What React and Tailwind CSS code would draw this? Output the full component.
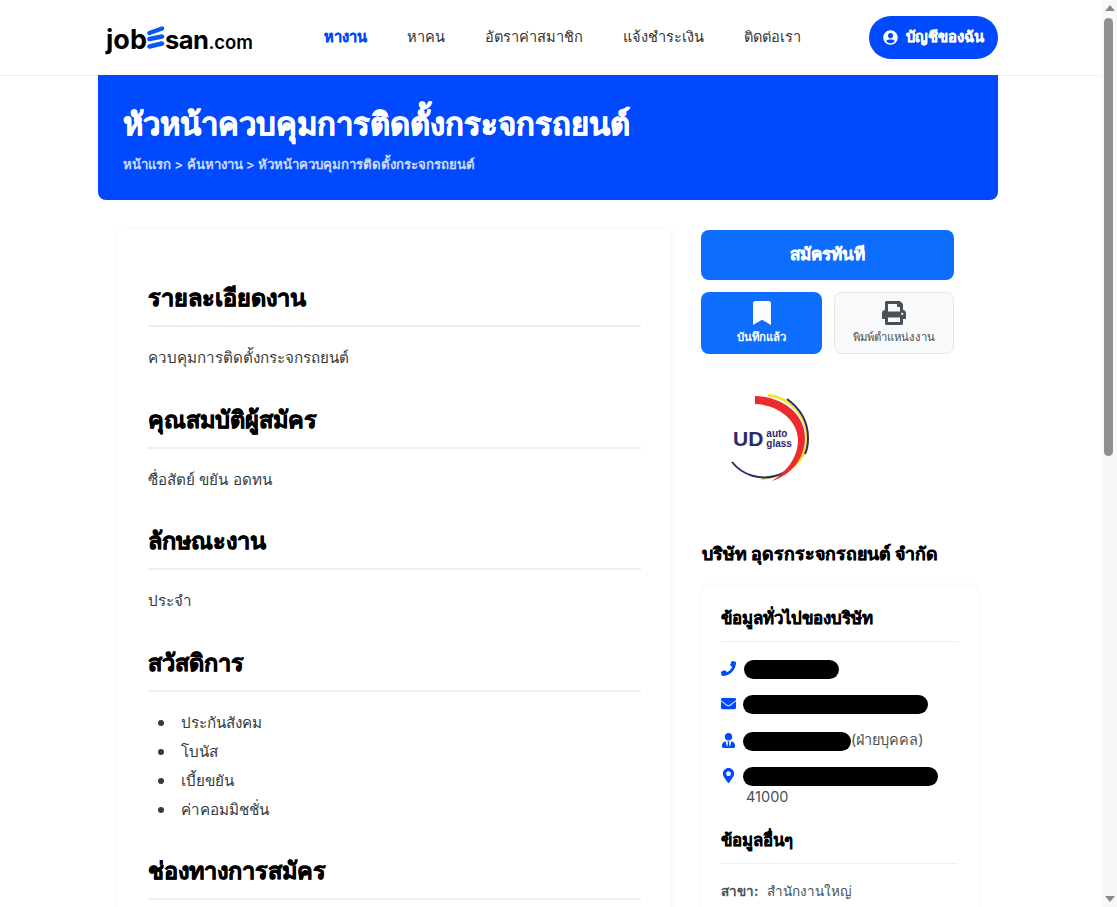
import React from "react";
import {
  FaBookmark,
  FaEnvelope,
  FaMapMarkerAlt,
  FaPhone,
  FaPrint,
  FaUserCircle,
  FaUserTie,
} from "react-icons/fa";

const sections = [
  { title: "รายละเอียดงาน", text: "ควบคุมการติดตั้งกระจกรถยนต์" },
  { title: "คุณสมบัติผู้สมัคร", text: "ซื่อสัตย์ ขยัน อดทน" },
  { title: "ลักษณะงาน", text: "ประจำ" },
  { title: "สวัสดิการ", list: ["ประกันสังคม", "โบนัส", "เบี้ยขยัน", "ค่าคอมมิชชั่น"] },
  { title: "ช่องทางการสมัคร" },
];

const navItems = ["หางาน", "หาคน", "อัตราค่าสมาชิก", "แจ้งชำระเงิน", "ติดต่อเรา"];

function Logo() {
  return (
    <div className="flex items-end h-[30px] font-['Inter',sans-serif] text-black leading-none">
      <span className="text-[27px] font-bold">job</span>
      <svg width="18" height="24" viewBox="0 0 18 24" className="mb-[3px]">
        <path d="M2.5 7 L15 2.5" stroke="#0d55f5" strokeWidth="4.5" strokeLinecap="round" />
        <path d="M2.5 13 L15 10.5" stroke="#0d55f5" strokeWidth="4.5" strokeLinecap="round" />
        <path d="M2.5 20.5 L15 17.5" stroke="#0d55f5" strokeWidth="4.5" strokeLinecap="round" />
      </svg>
      <span className="text-[25.5px] font-bold tracking-[-0.5px]">san</span>
      <span className="text-[18.5px] font-semibold mb-[1px]">.com</span>
    </div>
  );
}

function UdLogo() {
  return (
    <div className="relative w-[90px] h-[94px] ml-[24px]">
      <svg width="90" height="94" viewBox="0 0 90 94">
        <path d="M43 3 C66 6 82 24 82 46 C82 68 64 84 36 87" fill="none" stroke="#f6e51b" strokeWidth="2.5" />
        <path d="M62 7 C76 17 83 31 83 46 C83 52 82 58 80 62" fill="none" stroke="#2b2a6b" strokeWidth="2" />
        <path d="M7 70 C18 84 36 88 50 84 C58 82 62 79 65 75" fill="none" stroke="#2b2a6b" strokeWidth="2" />
        <path d="M30 4 C58 5 80 22 80 46 C80 68 64 84 47 89 C61 80 73 66 73 48 C73 29 54 13 30 12 Z" fill="#ed2a2e" />
      </svg>
      <div className="absolute left-[8px] top-[36px] flex items-center gap-[3px] font-['Liberation_Sans',sans-serif] font-bold text-[#2b2a6b]">
        <span className="text-[21px] leading-none">UD</span>
        <span className="text-[10px] leading-[10px]">
          auto
          <br />
          glass
        </span>
      </div>
    </div>
  );
}

function InfoRow({ icon, barWidth, barClass, children }) {
  return (
    <div className="flex items-start h-[20px]">
      <div className="w-[15px] h-[17px] mr-[7px] flex items-center justify-center text-[#0049ff] text-[15px] shrink-0">
        {icon}
      </div>
      <div className="flex items-center">
        <div className={`h-[19px] rounded-full bg-black ${barWidth} ${barClass}`} />
        {children}
      </div>
    </div>
  );
}

export default function App() {
  return (
    <div className="flex h-[907px] overflow-hidden bg-white font-['Inter','Noto_Sans',sans-serif] text-[#343a40]">
      <div className="flex-1 min-w-0">
        {/* Header */}
        <header className="h-[76px] border-b border-[#f3f3f3] pl-[106px] pr-[104px] flex items-center">
          <Logo />
          <nav className="flex items-center gap-[40px] ml-[71px] flex-1 text-[14.6px] font-medium text-[#333]">
            {navItems.map((item, i) => (
              <span key={item} className={i === 0 ? "font-bold text-[#0049ff] [-webkit-text-stroke:0.3px_#0049ff]" : ""}>
                {item}
              </span>
            ))}
          </nav>
          <button className="h-[43px] w-[129px] rounded-full bg-[#0049ff] text-white flex items-center justify-center gap-[8px] text-[14.8px] font-bold [-webkit-text-stroke:0.3px_white]">
            <FaUserCircle className="text-[15px]" />
            บัญชีของฉัน
          </button>
        </header>

        <div className="w-[900px] ml-[98px] -mt-[1px]">
          {/* Hero */}
          <div className="h-[125px] bg-[#0049ff] rounded-b-lg px-[25px] pt-[28px] text-white">
            <h1 className="text-[31px] leading-[42px] font-extrabold [-webkit-text-stroke:0.7px_white]">
              หัวหน้าควบคุมการติดตั้งกระจกรถยนต์
            </h1>
            <p className="mt-[10px] text-[13.2px] font-semibold text-white/80">
              หน้าแรก &gt; ค้นหางาน &gt; หัวหน้าควบคุมการติดตั้งกระจกรถยนต์
            </p>
          </div>

          <div className="flex mt-[30px]">
            {/* Job detail */}
            <main className="ml-[20px] w-[553px] h-[700px] rounded-lg bg-white shadow-[0_0_10px_rgba(0,0,0,0.05)] px-[30px] pt-[49px]">
              {sections.map((s) => (
                <section key={s.title} className={s.list ? "mb-[28px]" : "mb-[30.7px]"}>
                  <h2 className="text-[23.5px] leading-[38px] font-extrabold text-black border-b-2 border-[#eeeeee] pb-[8px] [-webkit-text-stroke:0.6px_black]">
                    {s.title}
                  </h2>
                  {s.text && <p className="mt-[19px] text-[15.2px] leading-[24px]">{s.text}</p>}
                  {s.list && (
                    <ul className="mt-[16px] text-[15.2px] leading-[29px]">
                      {s.list.map((x) => (
                        <li key={x} className="flex items-center">
                          <span className="size-[6px] rounded-full bg-[#343a40] ml-[10px] mr-[17px]" />
                          {x}
                        </li>
                      ))}
                    </ul>
                  )}
                </section>
              ))}
            </main>

            {/* Sidebar */}
            <aside className="ml-[30px] w-[277px]">
              <button className="w-[253px] h-[50px] rounded-lg bg-[#0d6efd] text-white text-[17px] font-extrabold [-webkit-text-stroke:0.4px_white]">
                สมัครทันที
              </button>
              <div className="flex gap-[12px] mt-[12px] w-[253px]">
                <button className="w-[121px] h-[62px] rounded-lg bg-[#0d6efd] text-white flex flex-col items-center justify-center gap-[4px] text-[11.3px] font-semibold">
                  <FaBookmark className="text-[24px]" />
                  บันทึกแล้ว
                </button>
                <button className="w-[120px] h-[62px] rounded-lg bg-[#f8f9fa] border border-[#e6e6e6] text-[#495057] flex flex-col items-center justify-center gap-[4px] text-[11.3px]">
                  <FaPrint className="text-[24px]" />
                  พิมพ์ตำแหน่งงาน
                </button>
              </div>

              <div className="mt-[38px]">
                <UdLogo />
              </div>

              <h3 className="ml-[1px] mt-[55px] text-[17.8px] leading-[26px] font-bold text-black [-webkit-text-stroke:0.4px_black]">
                บริษัท อุดรกระจกรถยนต์ จำกัด
              </h3>

              <div className="ml-[1px] mt-[20px] w-[276px] h-[400px] rounded-lg shadow-[0_0_10px_rgba(0,0,0,0.05)] pl-[19px] pr-[20px] pt-[18px]">
                <h4 className="text-[16.8px] leading-[26px] font-bold text-black border-b border-[#eeeeee] pb-[10px] [-webkit-text-stroke:0.3px_black]">
                  ข้อมูลทั่วไปของบริษัท
                </h4>
                <div className="mt-[18px] flex flex-col text-[14.5px] text-[#495057]">
                  <InfoRow icon={<FaPhone />} barWidth="w-[95px]" barClass="ml-[1px]" />
                  <div className="h-[15px]" />
                  <InfoRow icon={<FaEnvelope />} barWidth="w-[185px]" />
                  <div className="h-[17px]" />
                  <InfoRow icon={<FaUserTie />} barWidth="w-[108px]">
                    <span className="-mt-[3px]">(ฝ่ายบุคคล)</span>
                  </InfoRow>
                  <div className="h-[15px]" />
                  <InfoRow icon={<FaMapMarkerAlt />} barWidth="w-[195px]" />
                  <span className="ml-[25px] leading-[20px]">41000</span>
                </div>
                <h4 className="mt-[20px] text-[16.8px] leading-[26px] font-bold text-black border-b border-[#eeeeee] pb-[10px] [-webkit-text-stroke:0.3px_black]">
                  ข้อมูลอื่นๆ
                </h4>
                <p className="mt-[17px] text-[13.5px] text-[#495057]">
                  <b className="font-bold mr-[8px]">สาขา:</b>สำนักงานใหญ่
                </p>
              </div>
            </aside>
          </div>
        </div>
      </div>

      {/* Window scrollbar */}
      <div className="w-[15px] shrink-0 bg-[#f8f8f8] flex flex-col items-center justify-between py-[5px] relative">
        <div className="w-0 h-0 border-x-[5px] border-x-transparent border-b-[6px] border-b-[#8a8a8a]" />
        <div className="absolute top-[18px] left-[2px] w-[9px] h-[438px] rounded-full bg-[#8f8f8f]" />
        <div className="w-0 h-0 border-x-[5px] border-x-transparent border-t-[6px] border-t-[#8a8a8a]" />
      </div>
    </div>
  );
}
